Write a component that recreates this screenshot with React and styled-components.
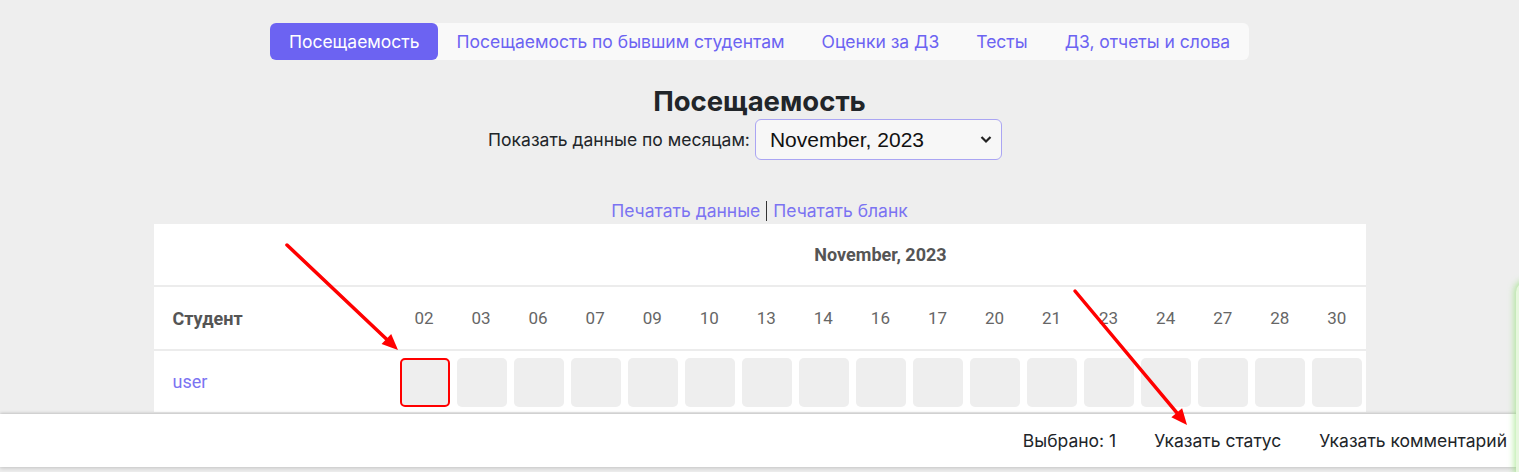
import React from "react";
import styled, { createGlobalStyle } from "styled-components";

const Global = createGlobalStyle`
  html, body { margin: 0; padding: 0; background: #eeeeee; }
  body { font-family: Inter, "Noto Sans", sans-serif; color: #212529; overflow: hidden; }
  * { box-sizing: border-box; }
`;

const Page = styled.div`
  position: relative;
  width: 1519px;
  height: 472px;
  display: flex;
  flex-direction: column;
  align-items: center;
  padding-top: 23px;
`;

const Tabs = styled.nav`
  display: flex;
  background: #f9f9f9;
  border-radius: 6px;
  height: 37px;
`;

const Tab = styled.a`
  display: flex;
  align-items: center;
  padding: 0 18.5px;
  font-size: 17.5px;
  border-radius: 6px;
  color: ${(p) => (p.$active ? "#ffffff" : "#6c63f2")};
  background: ${(p) => (p.$active ? "#6c63f2" : "transparent")};
  text-decoration: none;
  white-space: nowrap;
`;

const Title = styled.h1`
  margin: 26px 0 0;
  font-size: 27.5px;
  font-weight: 700;
  line-height: 31px;
  color: #212529;
`;

const FilterRow = styled.div`
  display: flex;
  align-items: center;
  gap: 5px;
  margin-top: 2px;
  padding-right: 29px;
  font-size: 17.5px;
`;

const SelectBox = styled.div`
  position: relative;
  width: 247px;
  height: 41px;
  border: 1px solid #aaa5f3;
  border-radius: 6px;
  background: #f7f7f7;
  display: flex;
  align-items: center;
  padding: 0 14px;
  font-family: "Liberation Sans", Arial, sans-serif;
  font-size: 21px;
  color: #111;
`;

const Chevron = styled.svg`
  position: absolute;
  right: 9px;
  top: 15px;
`;

const Links = styled.div`
  margin-top: 40px;
  font-size: 17.5px;
  line-height: 21px;
  display: flex;
  align-items: center;
  gap: 6px;
`;

const Link = styled.a`
  color: #7b73f2;
  text-decoration: none;
`;

const Sep = styled.span`
  width: 1px;
  height: 20px;
  background: #333;
`;

const Table = styled.table`
  margin-top: 3px;
  width: 1212px;
  border-collapse: collapse;
  background: #ffffff;
  font-family: Roboto, "Noto Sans", sans-serif;
  table-layout: fixed;
`;

const Th = styled.th`
  height: ${(p) => p.$h}px;
  text-align: ${(p) => p.$align || "center"};
  padding: ${(p) => (p.$align === "left" ? "0 0 0 19px" : "0")};
  font-size: ${(p) => (p.$bold ? "18px" : "17px")};
  font-weight: ${(p) => (p.$bold ? 700 : 400)};
  color: ${(p) => (p.$bold ? "#555555" : "#666666")};
  border-bottom: 2px solid #ececec;
`;

const Td = styled.td`
  height: 62px;
  padding: ${(p) => (p.$name ? "0 0 0 19px" : "7px 4px 0")};
  vertical-align: ${(p) => (p.$name ? "middle" : "top")};
  font-size: 18px;
`;

const UserLink = styled.a`
  color: #7b73f2;
  text-decoration: none;
`;

const DayBox = styled.div`
  width: 50px;
  height: 49px;
  margin: 0 auto;
  border-radius: 5px;
  background: #eeeeee;
  border: ${(p) => (p.$selected ? "2px solid #ff0000" : "none")};
`;

const BottomBar = styled.div`
  position: absolute;
  left: 0;
  right: 0;
  top: 414px;
  height: 53px;
  background: #ffffff;
  box-shadow: 0 -1px 3px rgba(0, 0, 0, 0.18), 0 2px 4px rgba(0, 0, 0, 0.12);
  display: flex;
  justify-content: flex-end;
  align-items: center;
  gap: 38px;
  padding-right: 12px;
  font-size: 17.5px;
  color: #212529;
`;

const BarItem = styled.span`
  white-space: nowrap;
`;

const Glow = styled.div`
  position: absolute;
  left: 1516px;
  top: 282px;
  width: 30px;
  height: 200px;
  border-radius: 10px;
  background: #e6f7dd;
  box-shadow: 0 0 6px 2px rgba(140, 225, 110, 0.6);
`;

const Arrows = styled.svg`
  position: absolute;
  left: 0;
  top: 0;
  pointer-events: none;
`;

const days = ["02","03","06","07","09","10","13","14","16","17","20","21","23","24","27","28","30"];

function Arrow({ x1, y1, x2, y2 }) {
  const ang = Math.atan2(y2 - y1, x2 - x1);
  const len = 16, w = 7;
  const bx = x2 - len * Math.cos(ang), by = y2 - len * Math.sin(ang);
  const px = -Math.sin(ang) * w, py = Math.cos(ang) * w;
  return (
    <g>
      <line x1={x1} y1={y1} x2={bx} y2={by} stroke="#ff0000" strokeWidth="3.5" strokeLinecap="round" />
      <polygon points={`${x2},${y2} ${bx + px},${by + py} ${bx - px},${by - py}`} fill="#ff0000" />
    </g>
  );
}

export default function App() {
  return (
    <>
      <Global />
      <Page>
        <Tabs>
          <Tab $active>Посещаемость</Tab>
          <Tab>Посещаемость по бывшим студентам</Tab>
          <Tab>Оценки за ДЗ</Tab>
          <Tab>Тесты</Tab>
          <Tab>ДЗ, отчеты и слова</Tab>
        </Tabs>
        <Title>Посещаемость</Title>
        <FilterRow>
          <span>Показать данные по месяцам:</span>
          <SelectBox>
            November, 2023
            <Chevron width="12" height="9" viewBox="0 0 12 9">
              <path d="M1.5 2 L6 6.5 L10.5 2" fill="none" stroke="#222" strokeWidth="2.2" />
            </Chevron>
          </SelectBox>
        </FilterRow>
        <Links>
          <Link>Печатать данные</Link>
          <Sep />
          <Link>Печатать бланк</Link>
        </Links>
        <Table>
          <colgroup>
            <col style={{ width: "242px" }} />
            {days.map((d) => <col key={d} />)}
          </colgroup>
          <thead>
            <tr>
              <Th $h={62} />
              <Th $h={62} $bold colSpan={17}>November, 2023</Th>
            </tr>
            <tr>
              <Th $h={64} $bold $align="left">Студент</Th>
              {days.map((d) => <Th key={d} $h={64}>{d}</Th>)}
            </tr>
          </thead>
          <tbody>
            <tr>
              <Td $name><UserLink>user</UserLink></Td>
              {days.map((d, i) => (
                <Td key={d}><DayBox $selected={i === 0} /></Td>
              ))}
            </tr>
          </tbody>
        </Table>
        <BottomBar>
          <BarItem>Выбрано: 1</BarItem>
          <BarItem>Указать статус</BarItem>
          <BarItem>Указать комментарий</BarItem>
        </BottomBar>
        <Glow />
        <Arrows width="1519" height="472">
          <Arrow x1={287} y1={245} x2={398} y2={350} />
          <Arrow x1={1075} y1={291} x2={1187} y2={425} />
        </Arrows>
      </Page>
    </>
  );
}
